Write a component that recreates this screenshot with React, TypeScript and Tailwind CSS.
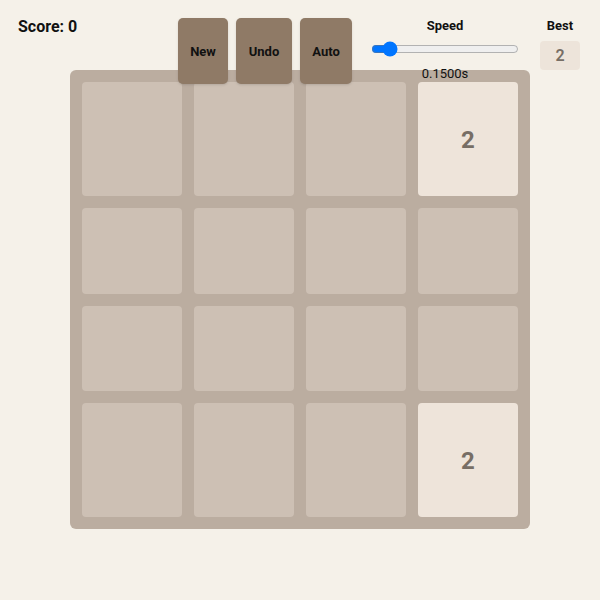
import React from "react";

const rows: { h: string; cells: (number | null)[] }[] = [
  { h: "h-[114px]", cells: [null, null, null, 2] },
  { h: "h-[86px]", cells: [null, null, null, null] },
  { h: "h-[85px]", cells: [null, null, null, null] },
  { h: "h-[114px]", cells: [null, null, null, 2] },
];

export default function App() {
  return (
    <div
      className="w-full h-[600px] bg-[#f5f1e9] text-[#111]"
      style={{ fontFamily: "Roboto, 'Liberation Sans', sans-serif" }}
    >
      <div className="relative z-10 flex h-[70px]">
        <div className="w-[178px] pl-[18px] pt-[15px] text-[16px] leading-6 font-bold">
          Score: 0
        </div>
        <div className="flex gap-2 pt-[18px]">
          {[
            ["New", "w-[50px]"],
            ["Undo", "w-[56px]"],
            ["Auto", "w-[52px]"],
          ].map(([t, w]) => (
            <button
              key={t}
              className={`${w} h-[66px] pt-[2px] rounded-[5px] bg-[#8f7a66] text-[13px] font-bold text-[#111] shadow-sm flex items-center justify-center`}
            >
              {t}
            </button>
          ))}
        </div>
        <div className="w-[186px] flex flex-col items-center pt-[17px]">
          <div className="text-[13px] leading-[18px] font-bold">Speed</div>
          <input
            type="range"
            min={0.05}
            max={1.2}
            step={0.01}
            defaultValue={0.15}
            className="mt-[6px] w-[148px] h-4"
          />
          <div className="mt-[8px] text-[13px] leading-[18px]">0.1500s</div>
        </div>
        <div className="w-[44px] flex flex-col items-center pt-[17px]">
          <div className="text-[13px] leading-[18px] font-bold">Best</div>
          <div className="mt-[6px] w-[40px] h-[39px] rounded-[4px] bg-[#ede4da] flex items-center justify-center text-[16px] font-semibold text-[#776e65]">
            2
          </div>
        </div>
      </div>
      <div className="ml-[70px] w-[460px] h-[459px] rounded-[6px] bg-[#bbada0] p-3 flex flex-col gap-3">
        {rows.map((r, i) => (
          <div key={i} className={`flex gap-3 ${r.h}`}>
            {r.cells.map((c, j) => (
              <div
                key={j}
                className={`w-[100px] h-full pt-[2px] rounded-[4px] flex items-center justify-center text-[24px] font-bold text-[#776e65] ${
                  c ? "bg-[#eee4da]" : "bg-[#cdc0b4]"
                }`}
              >
                {c ?? ""}
              </div>
            ))}
          </div>
        ))}
      </div>
    </div>
  );
}
